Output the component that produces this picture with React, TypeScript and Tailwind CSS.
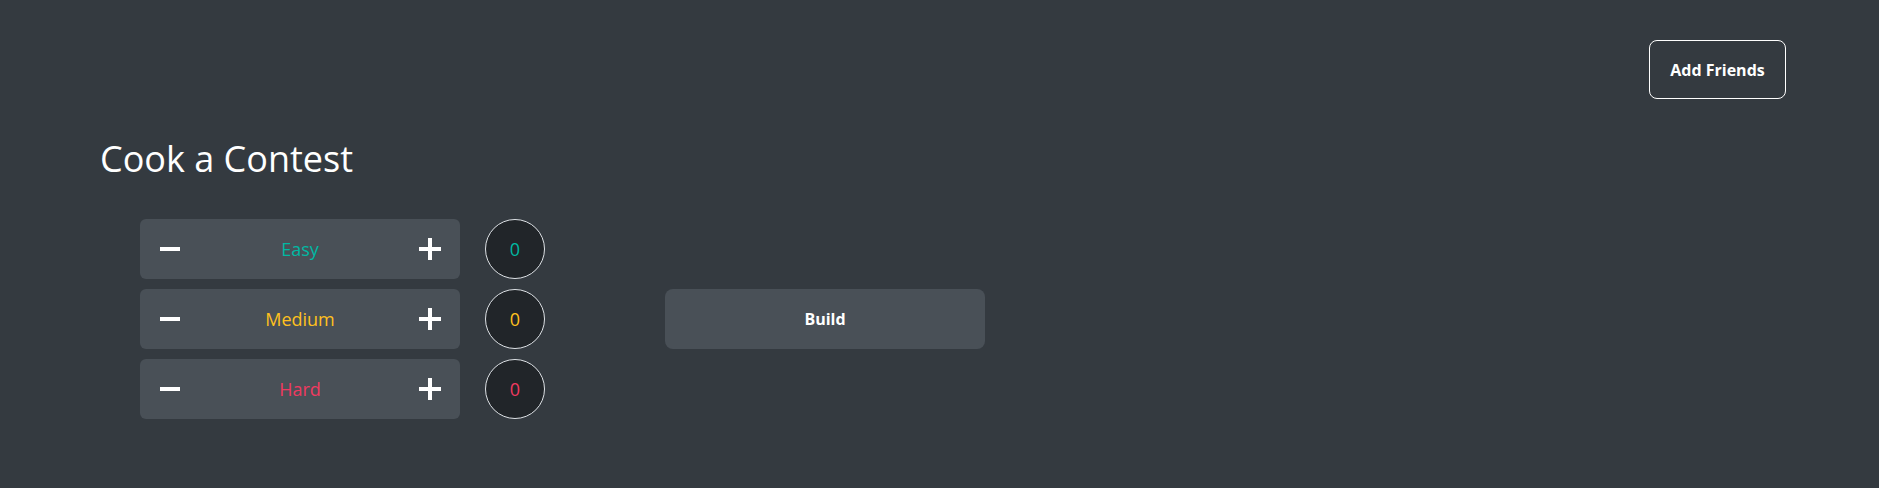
import React from "react";

const rows = [
  { label: "Easy", color: "text-[#00b8a3]" },
  { label: "Medium", color: "text-[#ffc01e]" },
  { label: "Hard", color: "text-[#ef3a60]" },
];

function Minus() {
  return (
    <svg width="22" height="22" viewBox="0 0 22 22">
      <rect x="1" y="9" width="20" height="4" fill="white" />
    </svg>
  );
}

function Plus() {
  return (
    <svg width="22" height="22" viewBox="0 0 22 22">
      <rect x="0" y="9" width="22" height="4" fill="white" />
      <rect x="9" y="0" width="4" height="22" fill="white" />
    </svg>
  );
}

export default function App() {
  return (
    <div
      className="h-[488px] w-full overflow-hidden bg-[#343a40] text-white"
      style={{ fontFamily: '"Open Sans", "Noto Sans", sans-serif' }}
    >
      <div className="flex justify-end pt-[40px] pr-[93px]">
        <button className="h-[59px] w-[137px] rounded-lg border border-white text-[16px] font-bold text-white">
          Add Friends
        </button>
      </div>
      <h1 className="mt-[38px] pl-[100px] text-[36px] leading-[43px] font-normal">Cook a Contest</h1>
      <div className="mt-[39px] flex items-center pl-[140px]">
        <div className="flex flex-col gap-[10px]">
          {rows.map((r) => (
            <div
              key={r.label}
              className="flex h-[60px] w-[320px] items-center justify-between rounded-md bg-[#495057] px-[19px]"
            >
              <Minus />
              <span className={`text-[18px] ${r.color}`}>{r.label}</span>
              <Plus />
            </div>
          ))}
        </div>
        <div className="ml-[25px] flex flex-col gap-[10px]">
          {rows.map((r) => (
            <div
              key={r.label}
              className={`flex h-[60px] w-[60px] items-center justify-center rounded-full border border-[#dee2e6] bg-[#212529] text-[18px] ${r.color}`}
            >
              0
            </div>
          ))}
        </div>
        <button className="ml-[120px] h-[60px] w-[320px] rounded-lg bg-[#495057] text-[16px] font-bold text-white">
          Build
        </button>
      </div>
    </div>
  );
}
